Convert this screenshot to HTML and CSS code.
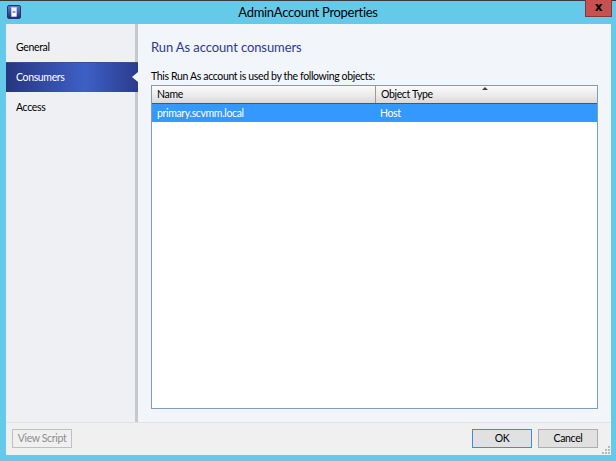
FILE: index.html
```html
<!DOCTYPE html>
<html>
<head>
<meta charset="utf-8">
<link rel="stylesheet" href="styles.css">
</head>
<body>
<div class="window">
  <div class="titlebar">
    <svg class="app-icon" width="14" height="14" viewBox="0 0 14 14">
      <defs>
        <linearGradient id="ig" x1="0" y1="0" x2="0" y2="1">
          <stop offset="0" stop-color="#6a7fc8"/>
          <stop offset="1" stop-color="#1c2a78"/>
        </linearGradient>
      </defs>
      <rect x="0.5" y="0.5" width="13" height="13" rx="1.5" fill="url(#ig)" stroke="#27346e"/>
      <rect x="4.5" y="2.5" width="5" height="9" fill="#ffffff" stroke="#c9d2f0" stroke-width="0.6"/>
      <rect x="5.5" y="6.5" width="3" height="1" fill="#27346e"/>
      <rect x="5.5" y="3.6" width="3" height="2" fill="#e4e9fb"/>
    </svg>
    <div class="title">AdminAccount Properties</div>
    <div class="close">x</div>
  </div>
  <div class="client">
    <div class="main">
      <div class="nav">
        <div class="nav-item">General</div>
        <div class="nav-item selected">Consumers</div>
        <div class="nav-item">Access</div>
      </div>
      <div class="content">
        <div class="heading">Run As account consumers</div>
        <div class="label">This Run As account is used by the following objects:</div>
        <div class="table">
          <div class="thead">
            <div class="th col-name">Name</div>
            <div class="th col-type">Object Type<span class="sort"></span></div>
          </div>
          <div class="row selected-row">
            <div class="td col-name">primary.scvmm.local</div>
            <div class="td col-type">Host</div>
          </div>
        </div>
      </div>
    </div>
    <div class="footer">
      <div class="btn disabled">View Script</div>
      <div class="spacer"></div>
      <div class="btn default">OK</div>
      <div class="btn">Cancel</div>
      <svg class="grip" width="9" height="9" viewBox="0 0 9 9">
        <rect x="7" y="1" width="2" height="2" fill="#b8b8b8"/>
        <rect x="4" y="4" width="2" height="2" fill="#b8b8b8"/>
        <rect x="7" y="4" width="2" height="2" fill="#b8b8b8"/>
        <rect x="1" y="7" width="2" height="2" fill="#b8b8b8"/>
        <rect x="4" y="7" width="2" height="2" fill="#b8b8b8"/>
        <rect x="7" y="7" width="2" height="2" fill="#b8b8b8"/>
      </svg>
    </div>
  </div>
</div>
</body>
</html>
```
FILE: styles.css
```css
* { box-sizing: border-box; }
html, body {
  margin: 0;
  padding: 0;
}
body {
  width: 616px;
  height: 461px;
  overflow: hidden;
  background: #65cae9;
  font-family: "Lato", "Open Sans", sans-serif;
  font-size: 10.5px;
  letter-spacing: -0.35px;
  color: #000;
}
.window {
  width: 616px;
  height: 461px;
  display: flex;
  flex-direction: column;
  border-top: 1px solid #3a3a3a;
  background: #65cae9;
}
.titlebar {
  height: 23px;
  display: flex;
  align-items: flex-start;
  position: relative;
}
.app-icon {
  margin: 4px 0 0 7px;
}
.title {
  flex: 1;
  text-align: center;
  font-size: 13px;
  letter-spacing: -0.3px;
  line-height: 22px;
  color: #000;
  padding-left: 10px;
}
.close {
  width: 27px;
  height: 17px;
  margin-right: 4px;
  margin-top: -1px;
  background: #c75050;
  border: 1px solid #7e3a3a;
  border-top: none;
  color: #000;
  font-family: "DejaVu Sans", sans-serif;
  font-weight: bold;
  font-size: 12px;
  letter-spacing: 0;
  line-height: 14px;
  text-align: center;
}
.client {
  flex: 1;
  margin: 0 5px 6px 6px;
  display: flex;
  flex-direction: column;
  background: #f0f0f0;
}
.main {
  height: 398px;
  display: flex;
}
.nav {
  width: 132px;
  background: #eef0f3;
  border-right: 3px solid #c6c8cb;
  padding-top: 8px;
}
.nav-item {
  height: 30px;
  line-height: 30px;
  padding-left: 10px;
  color: #000;
}
.nav-item.selected {
  margin-right: -3px;
  position: relative;
  color: #fff;
  background: linear-gradient(90deg, #27357f 0%, #3856b6 45%, #3d60c6 60%, #2b3b8c 100%);
  border-top: 1px solid #3a4c9a;
  line-height: 29px;
}
.nav-item.selected::after {
  content: "";
  position: absolute;
  right: 0;
  top: 9px;
  border-top: 5px solid transparent;
  border-bottom: 5px solid transparent;
  border-right: 6px solid #f2f5f9;
}
.content {
  flex: 1;
  background: #f2f5f9;
  padding: 13px 13px 13px 13px;
  display: flex;
  flex-direction: column;
}
.heading {
  font-size: 13px;
  letter-spacing: -0.1px;
  line-height: 20px;
  color: #2e3b8e;
}
.label {
  margin-top: 11px;
  line-height: 16px;
}
.table {
  margin-top: 1px;
  height: 324px;
  border: 1px solid #7f9db9;
  background: #fff;
}
.thead {
  display: flex;
  height: 18px;
  background: linear-gradient(180deg, #fbfbfb 0%, #ebebeb 55%, #d9d9d9 100%);
  border-bottom: 1px solid #5e5347;
}
.th {
  line-height: 17px;
  padding-left: 5px;
  position: relative;
}
.col-name { width: 224px; }
.th.col-name { border-right: 1px solid #9a9a9a; }
.col-type { flex: 1; }
.sort {
  position: absolute;
  left: 106px;
  top: 1px;
  border-left: 3px solid transparent;
  border-right: 3px solid transparent;
  border-bottom: 3px solid #404040;
}
.row {
  display: flex;
  height: 18px;
}
.selected-row {
  background: #3399ff;
  color: #fff;
}
.td {
  line-height: 18px;
  padding-left: 5px;
}
.td.col-type { padding-left: 4px; }
.footer {
  flex: 1;
  display: flex;
  align-items: flex-start;
  padding: 6px 0 0 6px;
  border-top: 1px solid #e2e2e2;
  position: relative;
}
.spacer { flex: 1; }
.btn {
  width: 60px;
  height: 19px;
  line-height: 17px;
  text-align: center;
  border: 1px solid #adadad;
  background: #e1e1e1;
  margin-right: 6px;
}
.btn.disabled {
  color: #8d8d8d;
  background: #f0f0f0;
  border-color: #bfbfbf;
}
.btn.default {
  border-color: #3c8fd6;
}
.grip {
  position: absolute;
  right: 1px;
  bottom: 1px;
}
.footer .btn:nth-last-of-type(1) { margin-right: 13px; }
```
